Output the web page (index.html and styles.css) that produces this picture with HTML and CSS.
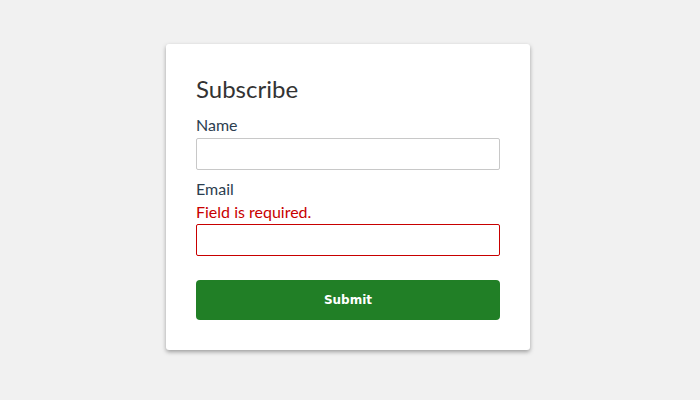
FILE: index.html
```html
<!DOCTYPE html>
<html lang="en">
<head>
    <meta charset="UTF-8">
    <meta name="viewport" content="width=device-width, initial-scale=1.0">
    <title>Subscribe</title>
    <link rel="stylesheet" href="styles.css">
</head>
<body>
    <!-- subscribe form -->
    <form class="card" novalidate>
        <h2>Subscribe</h2>
        <div class="field">
            <label for="name">Name</label>
            <input type="text" id="name">
        </div>
        <div class="field">
            <label for="email">Email</label>
            <span class="error">Field is required.</span>
            <input type="email" id="email" class="invalid">
        </div>
        <button type="submit">Submit</button>
    </form>
</body>
</html>
```
FILE: styles.css
```css
body {
    font-family: Lato, "Open Sans", sans-serif;
    display: flex;
    justify-content: center;
    align-items: flex-start;
    margin: 0;
    padding: 44px 4px 0 0;
    height: 100vh;
    box-sizing: border-box;
    background-color: #f1f1f1;
}
.card {
    width: 364px;
    box-sizing: border-box;
    padding: 30px;
    background-color: white;
    border-radius: 3px;
    box-shadow: 0px 2px 4px rgba(0, 0, 0, 0.35);
}
h2 {
    margin: 0 0 10px;
    font-size: 24px;
    font-weight: 400;
    line-height: 30px;
    color: #333;
}
.field {
    display: flex;
    flex-direction: column;
}
label {
    font-size: 16px;
    line-height: 22px;
    color: #2c3e50;
    margin-bottom: 2px;
}
.field + .field label {
    margin-top: 8px;
    margin-bottom: 0;
}
input {
    height: 32px;
    box-sizing: border-box;
    padding: 4px 8px;
    border: 1px solid #c8c8c8;
    border-radius: 2px;
    font-size: 16px;
    font-family: inherit;
}
input.invalid {
    border-color: #c80000;
}
.error {
    font-size: 16px;
    line-height: 20px;
    color: #c80000;
    margin: 2px 0 2px;
}
button {
    display: block;
    width: 100%;
    height: 40px;
    margin-top: 24px;
    background-color: #217f26;
    color: white;
    border: none;
    border-radius: 4px;
    font-family: "DejaVu Sans", sans-serif;
    font-weight: bold;
    font-size: 12px;
    cursor: pointer;
}
```
